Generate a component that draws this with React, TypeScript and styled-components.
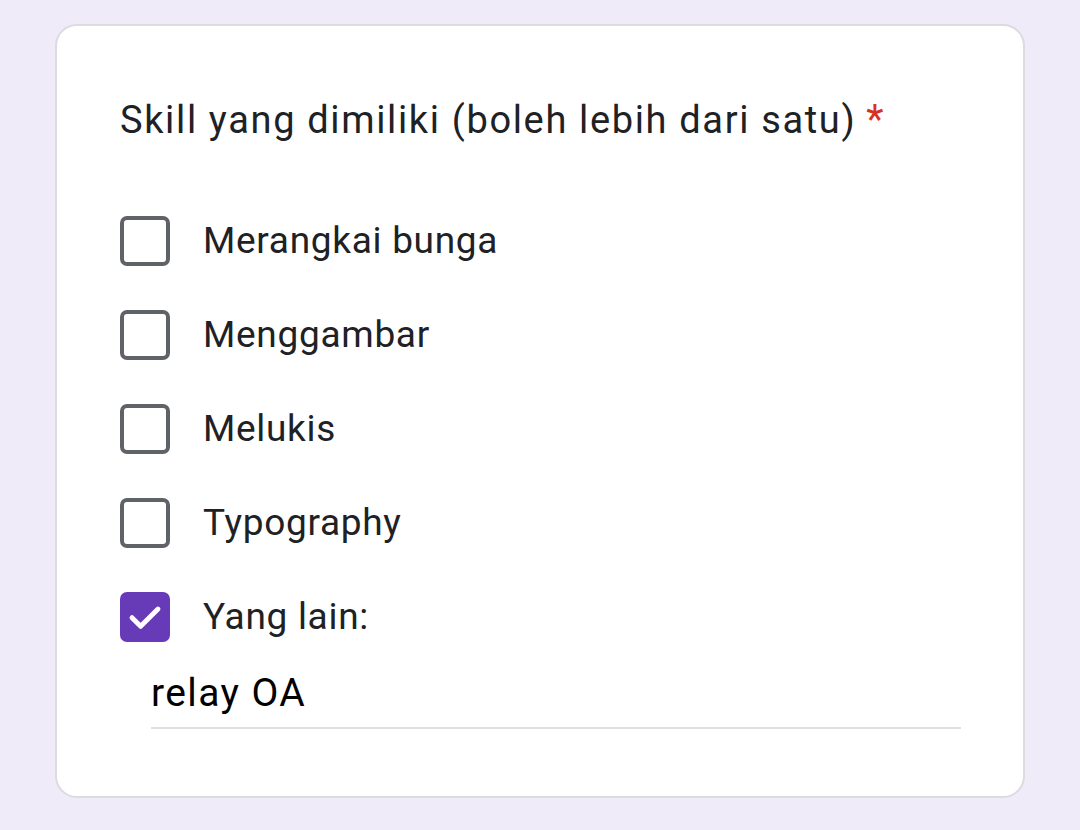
import React, { useState } from "react";
import styled, { createGlobalStyle } from "styled-components";

// ============================================
// DATA
// ============================================
const OPTIONS = ["Merangkai bunga", "Menggambar", "Melukis", "Typography"];
const OTHER = "Yang lain:";

// ============================================
// STYLES
// ============================================
const GlobalStyle = createGlobalStyle`
  html, body {
    margin: 0;
    padding: 0;
    background: #efebf8;
  }
  body {
    font-family: Roboto, "Noto Sans", Arial, sans-serif;
    color: #202124;
  }
`;

const Page = styled.main`
  min-height: 830px;
  box-sizing: border-box;
  padding: 24px 55px 0 55px;
`;

const Card = styled.section`
  box-sizing: border-box;
  width: 970px;
  height: 774px;
  background: #ffffff;
  border: 2px solid #dcdbe0;
  border-radius: 22px;
  padding: 70px 62px 0 63px;
`;

const Title = styled.h2`
  margin: 0 0 72px;
  font-size: 38px;
  font-weight: 400;
  line-height: 48px;
  letter-spacing: 1.65px;
`;

const Required = styled.span`
  color: #d93025;
  margin-left: 10px;
  font-size: 40px;
`;

const OptionList = styled.div`
  display: flex;
  flex-direction: column;
  gap: 44px;
`;

const OptionRow = styled.label`
  display: flex;
  align-items: center;
  gap: 33px;
  height: 50px;
  cursor: pointer;
`;

const Box = styled.span<{ $checked?: boolean }>`
  box-sizing: border-box;
  width: 50px;
  height: 50px;
  flex-shrink: 0;
  border-radius: 7px;
  border: 4px solid ${(p) => (p.$checked ? "#673ab7" : "#5f6368")};
  background: ${(p) => (p.$checked ? "#673ab7" : "#fff")};
  display: grid;
  place-items: center;
`;

const Label = styled.span`
  font-size: 37px;
  line-height: 48px;
  letter-spacing: 0.7px;
`;

const OtherInput = styled.div`
  margin: 26px 0 0 31px;
  width: 810px;
  border-bottom: 2px solid #e0e0e0;
  font-size: 39px;
  line-height: 50px;
  letter-spacing: 1.4px;
  padding-bottom: 9px;
  color: #000;
`;

// ============================================
// COMPONENTS
// ============================================
const Check = () => (
  <svg width="40" height="40" viewBox="0 0 24 24" aria-hidden="true">
    <path
      d="M4.2 12.4l5.2 5.2L19.8 7.2"
      fill="none"
      stroke="#fff"
      strokeWidth="2.9"
      strokeLinecap="round"
      strokeLinejoin="round"
    />
  </svg>
);

const Option: React.FC<{
  label: string;
  checked: boolean;
  onToggle: () => void;
}> = ({ label, checked, onToggle }) => (
  <OptionRow onClick={onToggle}>
    <Box $checked={checked} role="checkbox" aria-checked={checked}>
      {checked && <Check />}
    </Box>
    <Label>{label}</Label>
  </OptionRow>
);

export default function App() {
  const [checked, setChecked] = useState<Record<string, boolean>>({
    [OTHER]: true,
  });
  const toggle = (k: string) => setChecked((c) => ({ ...c, [k]: !c[k] }));

  return (
    <>
      <GlobalStyle />
      <Page>
        <Card>
          <Title>
            Skill yang dimiliki (boleh lebih dari satu)
            <Required>*</Required>
          </Title>
          <OptionList>
            {[...OPTIONS, OTHER].map((o) => (
              <Option
                key={o}
                label={o}
                checked={!!checked[o]}
                onToggle={() => toggle(o)}
              />
            ))}
          </OptionList>
          <OtherInput>relay OA</OtherInput>
        </Card>
      </Page>
    </>
  );
}
